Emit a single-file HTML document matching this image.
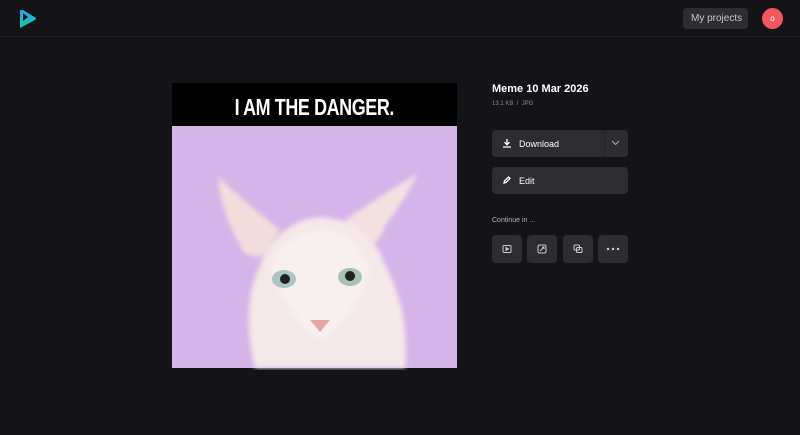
<!DOCTYPE html>
<html><head><style>
*{margin:0;padding:0;box-sizing:border-box}
body{width:800px;height:435px;background:#141418;font-family:"Liberation Sans",sans-serif;color:#fff;position:relative;overflow:hidden}
.top{position:absolute;left:0;top:0;width:800px;height:37px;border-bottom:1px solid #202026}
.btn{position:absolute;background:#2c2c31;border-radius:4px}
.t{position:absolute;white-space:nowrap}
</style></head><body>
<div class="top"></div>
<svg style="position:absolute;left:18px;top:9px" width="20" height="20" viewBox="0 0 20 20"><defs><linearGradient id="g" x1="0" y1="0" x2="0" y2="1"><stop offset="0" stop-color="#2aa3f5"/><stop offset="1" stop-color="#18c99a"/></linearGradient></defs><path d="M2 1 L5 1 L5 12 L10 8 L5 4 V1 L18 9 Q18 10 17 11 L2 19 Z" fill="url(#g)"/></svg>
<div class="btn" style="left:683px;top:8px;width:65px;height:21px"></div>
<div class="t" style="left:691px;top:13px;font-size:10px;color:#c8c8cc">My projects</div>
<div style="position:absolute;left:762px;top:8px;width:21px;height:21px;border-radius:50%;background:#f2565e;color:#fff;font-size:8px;text-align:center;line-height:21px">o</div>

<svg style="position:absolute;left:170px;top:80px" width="290" height="290" viewBox="0 0 290 290">
<defs><filter id="b"><feGaussianBlur stdDeviation="2.5"/></filter></defs>
<rect x="2" y="3" width="285" height="285" fill="#d5b4ea"/>
<rect x="2" y="3" width="285" height="43" fill="#000"/>
<text x="145" y="35" text-anchor="middle" font-family="Liberation Sans" font-weight="bold" font-size="23" fill="#fff" transform="scale(0.78,1) translate(40,0)" style="letter-spacing:-0.5px">I AM THE DANGER.</text>
<g filter="url(#b)">
<path d="M48 96 Q60 110 110 150 L95 175 Q75 180 70 165 Q50 130 48 96Z" fill="#f2dedd"/>
<path d="M247 94 Q220 110 175 140 L195 170 Q212 160 215 145 Q235 120 247 94Z" fill="#f3e2e2"/>
<path d="M85 288 Q70 230 90 185 Q110 140 150 137 Q200 140 215 185 Q240 230 235 288Z" fill="#f4e8e8"/>
<path d="M100 190 Q120 240 150 260 Q185 240 200 190 Q185 150 150 150 Q110 155 100 190Z" fill="#f8efef"/>
</g>
<ellipse cx="114" cy="199" rx="12" ry="9" fill="#a9c6c2"/><circle cx="115" cy="199" r="5" fill="#222"/>
<ellipse cx="180" cy="197" rx="12" ry="9" fill="#a9c2b4"/><circle cx="180" cy="196" r="5" fill="#222"/>
<path d="M140 240 L160 240 L150 252Z" fill="#e8a4a8"/>
</svg>

<div class="t" style="left:492px;top:83px;font-size:11px;font-weight:bold">Meme 10 Mar 2026</div>
<div class="t" style="left:492px;top:101px;font-size:6px;color:#8a8a90">13.1 KB &nbsp;/&nbsp; JPG</div>
<div class="btn" style="left:492px;top:130px;width:136px;height:27px"></div>
<div style="position:absolute;left:604px;top:130px;width:1px;height:27px;background:#222227"></div>
<svg style="position:absolute;left:502px;top:138px" width="10" height="10" viewBox="0 0 10 10" fill="none" stroke="#fff" stroke-width="1.3"><path d="M5 1V6.5M2.5 4.2L5 6.7L7.5 4.2M1 9H9"/></svg>
<div class="t" style="left:519px;top:139px;font-size:9px">Download</div>
<svg style="position:absolute;left:611px;top:140px" width="9" height="6" viewBox="0 0 9 6" fill="none" stroke="#aaa" stroke-width="1"><path d="M1 1L4.5 4.5L8 1"/></svg>
<div class="btn" style="left:492px;top:167px;width:136px;height:27px"></div>
<svg style="position:absolute;left:502px;top:175px" width="10" height="10" viewBox="0 0 10 10" fill="none" stroke="#fff" stroke-width="1.3"><path d="M2 8L2.5 6L6.5 2L8 3.5L4 7.5Z"/></svg>
<div class="t" style="left:519px;top:176px;font-size:9px">Edit</div>
<div class="t" style="left:492px;top:217px;font-size:7px;color:#b0b0b6">Continue in ...</div>
<div class="btn" style="left:492px;top:235px;width:30px;height:28px"></div>
<div class="btn" style="left:527px;top:235px;width:30px;height:28px"></div>
<div class="btn" style="left:563px;top:235px;width:30px;height:28px"></div>
<div class="btn" style="left:598px;top:235px;width:30px;height:28px"></div>
<svg style="position:absolute;left:502px;top:244px" width="10" height="10" viewBox="0 0 10 10" fill="none" stroke="#ccc" stroke-width="1"><rect x="1" y="1.5" width="8" height="7" rx="1"/><path d="M4 3.5L6.5 5L4 6.5Z" fill="#ccc"/></svg>
<svg style="position:absolute;left:537px;top:244px" width="10" height="10" viewBox="0 0 10 10" fill="none" stroke="#ccc" stroke-width="1"><rect x="1" y="1" width="8" height="8" rx="1.5"/><path d="M3 7L7 3M5 3H7V5"/></svg>
<svg style="position:absolute;left:573px;top:244px" width="10" height="10" viewBox="0 0 10 10" fill="none" stroke="#ccc" stroke-width="1"><rect x="1" y="1" width="5.5" height="5" rx="1"/><rect x="3.5" y="3.5" width="5.5" height="5" rx="1"/></svg>
<svg style="position:absolute;left:605px;top:247px" width="16" height="4" viewBox="0 0 16 4" fill="#ccc"><circle cx="3" cy="2" r="1.2"/><circle cx="8" cy="2" r="1.2"/><circle cx="13" cy="2" r="1.2"/></svg>
</body></html>
